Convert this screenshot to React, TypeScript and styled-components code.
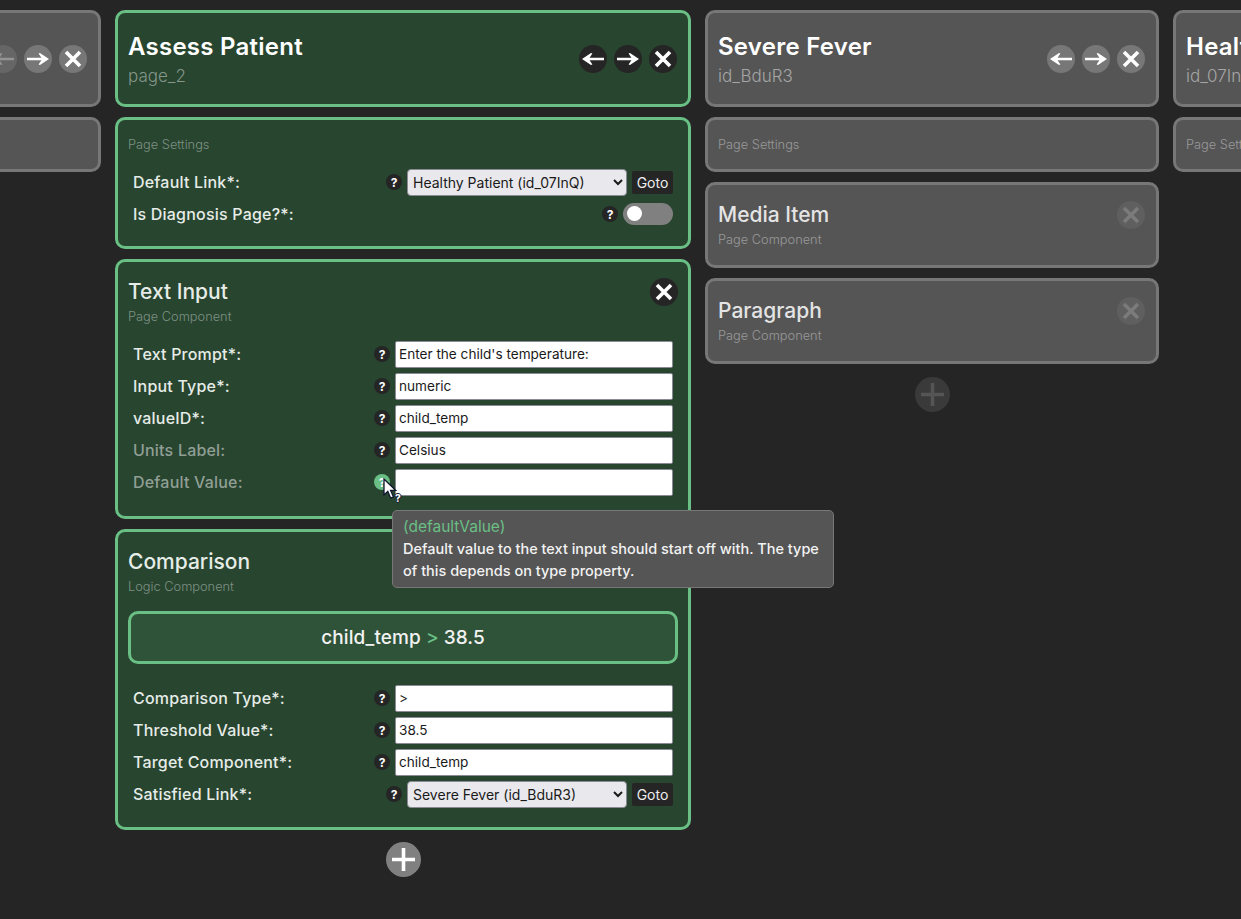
import { createGlobalStyle, styled } from 'styled-components'

const FONT = `Inter, "Open Sans", "Liberation Sans", sans-serif`

const GlobalStyle = createGlobalStyle`
  html, body {
    margin: 0;
    height: 100%;
    background: #252525;
    overflow: hidden;
  }
  body {
    font-family: ${FONT};
  }
  * { box-sizing: border-box; }
`

const Strip = styled.main`
  display: flex;
  align-items: flex-start;
  gap: 14px;
  width: max-content;
  margin-left: -353px;
  padding-top: 10px;
`

const Column = styled.section<{ $wide?: boolean }>`
  flex: none;
  width: ${({ $wide }) => ($wide ? '576px' : '454px')};
  display: flex;
  flex-direction: column;
  gap: 10px;
`

const Card = styled.div<{ $active?: boolean }>`
  position: relative;
  padding: 15px 10px 16px;
  border: 3px solid ${({ $active }) => ($active ? '#6abf85' : '#777777')};
  border-radius: 10px;
  background: ${({ $active }) => ($active ? '#28452f' : '#555555')};
`

const EmptySettings = styled(Card)`
  padding-bottom: 15px;
`

const HeadRow = styled.div`
  display: flex;
  align-items: flex-start;
  justify-content: space-between;
`

const PageHeadRow = styled(HeadRow)`
  align-items: center;
`

const PageTitle = styled.h1`
  margin: 0;
  font-size: 24px;
  line-height: 37px;
  font-weight: 600;
  letter-spacing: 0.25px;
  color: #ffffff;
  white-space: nowrap;
`

const PageId = styled.div<{ $active?: boolean }>`
  margin-top: -1px;
  font-size: 17px;
  line-height: 24px;
  font-weight: 300;
  color: ${({ $active }) => ($active ? '#84958a' : '#a5a5a5')};
  white-space: nowrap;
`

const CompTitle = styled.h2<{ $active?: boolean }>`
  margin: 0;
  font-size: 21px;
  line-height: 30px;
  font-weight: 500;
  color: ${({ $active }) => ($active ? '#e6ece8' : '#e4e4e4')};
`

const Kind = styled.div<{ $active?: boolean }>`
  font-size: 12.8px;
  line-height: 19px;
  font-weight: 300;
  color: ${({ $active }) => ($active ? '#7d9084' : '#989898')};
`

const Buttons = styled.div`
  display: flex;
  gap: 7px;
  margin-right: 1px;
  margin-top: 1px;
`

const RoundButton = styled.button<{ $tone: 'dark' | 'grey' | 'muted' | 'off' }>`
  flex: none;
  width: 28px;
  height: 28px;
  padding: 0;
  border: 0;
  border-radius: 50%;
  display: flex;
  align-items: center;
  justify-content: center;
  background: ${({ $tone }) =>
    $tone === 'dark' ? '#252525' : $tone === 'grey' ? '#777777' : $tone === 'off' ? '#666666' : '#5f5f5f'};
  color: ${({ $tone }) => ($tone === 'muted' ? '#7b7b7b' : $tone === 'off' ? '#949494' : '#ffffff')};
`

const CornerClose = styled.div`
  margin: 1px 1px 0 0;
`

const ActiveClose = styled.div`
  margin-top: 1px;
`

const Rows = styled.div<{ $top: number; $bottom?: number }>`
  display: flex;
  flex-direction: column;
  margin: ${({ $top, $bottom = 0 }) => `${$top}px 5px ${$bottom}px`};
`

const Row = styled.div`
  height: 32px;
  display: flex;
  align-items: center;
`

const Label = styled.div<{ $optional?: boolean }>`
  flex: 1;
  font-size: 16px;
  letter-spacing: 0.2px;
  font-weight: 500;
  color: ${({ $optional }) => ($optional ? '#909f95' : '#e6ece8')};
  white-space: nowrap;
`

const HelpWrap = styled.div`
  position: relative;
  flex: none;
  margin-right: 5px;
`

const Help = styled.div<{ $hover?: boolean }>`
  width: 16px;
  height: 16px;
  border-radius: 50%;
  display: flex;
  align-items: center;
  justify-content: center;
  font-size: 12px;
  font-weight: 700;
  background: ${({ $hover }) => ($hover ? '#6abf85' : '#252525')};
  color: #ffffff;
`

const TextField = styled.input`
  flex: none;
  width: 278px;
  height: 27px;
  padding: 0 3px;
  border: 1px solid #8a8a94;
  border-radius: 2px;
  background: #ffffff;
  color: #1a1a1a;
  font-family: ${FONT};
  font-size: 13.6px;
`

const Select = styled.select`
  flex: none;
  width: 220px;
  height: 27px;
  padding: 0 1px;
  border: 1px solid #8a8a94;
  border-radius: 4px;
  background: #e9e9ed;
  color: #1a1a1a;
  font-family: ${FONT};
  font-size: 14px;
`

const Goto = styled.button`
  flex: none;
  width: 41px;
  height: 23px;
  margin-left: 5px;
  padding: 0;
  border: 0;
  border-radius: 2px;
  background: #252525;
  color: #eeeeee;
  font-family: ${FONT};
  font-size: 14px;
`

const Toggle = styled.div`
  flex: none;
  width: 50px;
  height: 22px;
  padding: 3px 0 0 4px;
  border-radius: 11px;
  background: #808080;
`

const Knob = styled.div`
  width: 15px;
  height: 15px;
  border-radius: 50%;
  background: #ffffff;
`

const Expression = styled.div`
  height: 53px;
  margin-top: 15px;
  display: flex;
  align-items: center;
  justify-content: center;
  gap: 5px;
  border: 3px solid #6abf85;
  border-radius: 10px;
  background: #2f5338;
  color: #f2f2f2;
  font-size: 19px;
  letter-spacing: 0.1px;
  font-weight: 500;
`

const Operator = styled.span`
  color: #6abf85;
`

const AddButton = styled.button<{ $active?: boolean }>`
  align-self: center;
  width: 35px;
  height: 35px;
  margin-top: ${({ $active }) => ($active ? '2px' : '3px')};
  padding: 0;
  border: 0;
  border-radius: 50%;
  display: flex;
  align-items: center;
  justify-content: center;
  background: ${({ $active }) => ($active ? '#808080' : '#3a3a3a')};
  color: ${({ $active }) => ($active ? '#ffffff' : '#555555')};
`

const Tooltip = styled.div`
  position: absolute;
  z-index: 5;
  left: 18px;
  top: 36px;
  width: 442px;
  height: 78px;
  padding: 5px 10px;
  border: 1px solid #777777;
  border-radius: 5px;
  background: #555555;
  font-size: 14.5px;
  line-height: 22px;
  font-weight: 500;
  color: #f2f2f2;
`

const TooltipKey = styled.div`
  font-size: 15.5px;
  font-weight: 400;
  color: #6abf85;
`

const PointerMark = styled.div`
  position: absolute;
  z-index: 6;
  left: 9px;
  top: 4px;
  width: 24px;
  height: 28px;
`

const PointerHint = styled.span`
  position: absolute;
  left: 12px;
  top: 14px;
  font-size: 10px;
  line-height: 12px;
  font-weight: 800;
  color: #ffffff;
  text-shadow: 1px 0 #10162f, -1px 0 #10162f, 0 1px #10162f, 0 -1px #10162f;
`

const ArrowIcon = ({ right }: { right?: boolean }) => (
  <svg width="24" height="16" viewBox="0 0 24 16" fill="currentColor">
    <path
      d={
        right
          ? 'M1 6.8H15.4L12.6 2.6 14 2 23 8 14 14 12.6 13.4 15.4 9.2H1Z'
          : 'M23 6.8H8.6L11.4 2.6 10 2 1 8 10 14 11.4 13.4 8.6 9.2H23Z'
      }
    />
  </svg>
)

const CloseIcon = () => (
  <svg width="20" height="20" viewBox="0 0 20 20" fill="none" stroke="currentColor" strokeWidth="3.6">
    <path d="M3 3 17 17M17 3 3 17" />
  </svg>
)

const PlusIcon = () => (
  <svg width="23" height="23" viewBox="0 0 23 23" fill="none" stroke="currentColor" strokeWidth="3.6">
    <path d="M11.5 0V23M0 11.5H23" />
  </svg>
)

const PointerIcon = () => (
  <svg width="14" height="22" viewBox="0 0 14 22">
    <path d="M1 1V17L4.8 13.4 7.6 20 10.4 18.8 7.6 12.4H12.6Z" fill="#ffffff" stroke="#10162f" strokeWidth="1.3" />
  </svg>
)

type PageProps = {
  title: string
  id: string
  active?: boolean
  first?: boolean
}

const PageHeader = ({ title, id, active, first }: PageProps) => {
  const tone = active ? 'dark' : 'grey'
  return (
    <Card $active={active}>
      <PageHeadRow>
        <div>
          <PageTitle>{title}</PageTitle>
          <PageId $active={active}>{id}</PageId>
        </div>
        <Buttons>
          <RoundButton $tone={first ? 'off' : tone} aria-label="Move left"><ArrowIcon /></RoundButton>
          <RoundButton $tone={tone} aria-label="Move right"><ArrowIcon right /></RoundButton>
          <RoundButton $tone={tone} aria-label="Delete page"><CloseIcon /></RoundButton>
        </Buttons>
      </PageHeadRow>
    </Card>
  )
}

const ClosedComponent = ({ title }: { title: string }) => (
  <Card>
    <HeadRow>
      <div>
        <CompTitle>{title}</CompTitle>
        <Kind>Page Component</Kind>
      </div>
      <CornerClose>
        <RoundButton $tone="muted" aria-label="Delete component"><CloseIcon /></RoundButton>
      </CornerClose>
    </HeadRow>
  </Card>
)

const InputRow = ({ label, value, optional }: { label: string; value: string; optional?: boolean }) => (
  <Row>
    <Label $optional={optional}>{label}</Label>
    <HelpWrap><Help>?</Help></HelpWrap>
    <TextField readOnly value={value} />
  </Row>
)

const LinkRow = ({ label, value }: { label: string; value: string }) => (
  <Row>
    <Label>{label}</Label>
    <HelpWrap><Help>?</Help></HelpWrap>
    <Select value={value} onChange={() => undefined}>
      <option>{value}</option>
    </Select>
    <Goto>Goto</Goto>
  </Row>
)

export default function App() {
  return (
    <>
      <GlobalStyle />
      <Strip>
        <Column>
          <PageHeader title="Start Page" id="page_1" first />
          <EmptySettings><Kind>Page Settings</Kind></EmptySettings>
        </Column>

        <Column $wide>
          <PageHeader title="Assess Patient" id="page_2" active />

          <Card $active>
            <Kind $active>Page Settings</Kind>
            <Rows $top={12}>
              <LinkRow label="Default Link*:" value="Healthy Patient (id_07InQ)" />
              <Row>
                <Label>Is Diagnosis Page?*:</Label>
                <HelpWrap><Help>?</Help></HelpWrap>
                <Toggle><Knob /></Toggle>
              </Row>
            </Rows>
          </Card>

          <Card $active>
            <HeadRow>
              <div>
                <CompTitle $active>Text Input</CompTitle>
                <Kind $active>Page Component</Kind>
              </div>
              <ActiveClose>
                <RoundButton $tone="dark" aria-label="Delete component"><CloseIcon /></RoundButton>
              </ActiveClose>
            </HeadRow>
            <Rows $top={12} $bottom={2}>
              <InputRow label="Text Prompt*:" value="Enter the child's temperature:" />
              <InputRow label="Input Type*:" value="numeric" />
              <InputRow label="valueID*:" value="child_temp" />
              <InputRow label="Units Label:" value="Celsius" optional />
              <Row>
                <Label $optional>Default Value:</Label>
                <HelpWrap>
                  <Help $hover>?</Help>
                  <PointerMark>
                    <PointerIcon />
                    <PointerHint>?</PointerHint>
                  </PointerMark>
                  <Tooltip>
                    <TooltipKey>(defaultValue)</TooltipKey>
                    Default value to the text input should start off with. The type of this depends on type property.
                  </Tooltip>
                </HelpWrap>
                <TextField readOnly value="" />
              </Row>
            </Rows>
          </Card>

          <Card $active>
            <CompTitle $active>Comparison</CompTitle>
            <Kind $active>Logic Component</Kind>
            <Expression>
              child_temp <Operator>&gt;</Operator> 38.5
            </Expression>
            <Rows $top={18} $bottom={1}>
              <InputRow label="Comparison Type*:" value=">" />
              <InputRow label="Threshold Value*:" value="38.5" />
              <InputRow label="Target Component*:" value="child_temp" />
              <LinkRow label="Satisfied Link*:" value="Severe Fever (id_BduR3)" />
            </Rows>
          </Card>

          <AddButton $active aria-label="Add component"><PlusIcon /></AddButton>
        </Column>

        <Column>
          <PageHeader title="Severe Fever" id="id_BduR3" />
          <EmptySettings><Kind>Page Settings</Kind></EmptySettings>
          <ClosedComponent title="Media Item" />
          <ClosedComponent title="Paragraph" />
          <AddButton aria-label="Add component"><PlusIcon /></AddButton>
        </Column>

        <Column>
          <PageHeader title="Healthy Patient" id="id_07InQ" />
          <EmptySettings><Kind>Page Settings</Kind></EmptySettings>
        </Column>
      </Strip>
    </>
  )
}
